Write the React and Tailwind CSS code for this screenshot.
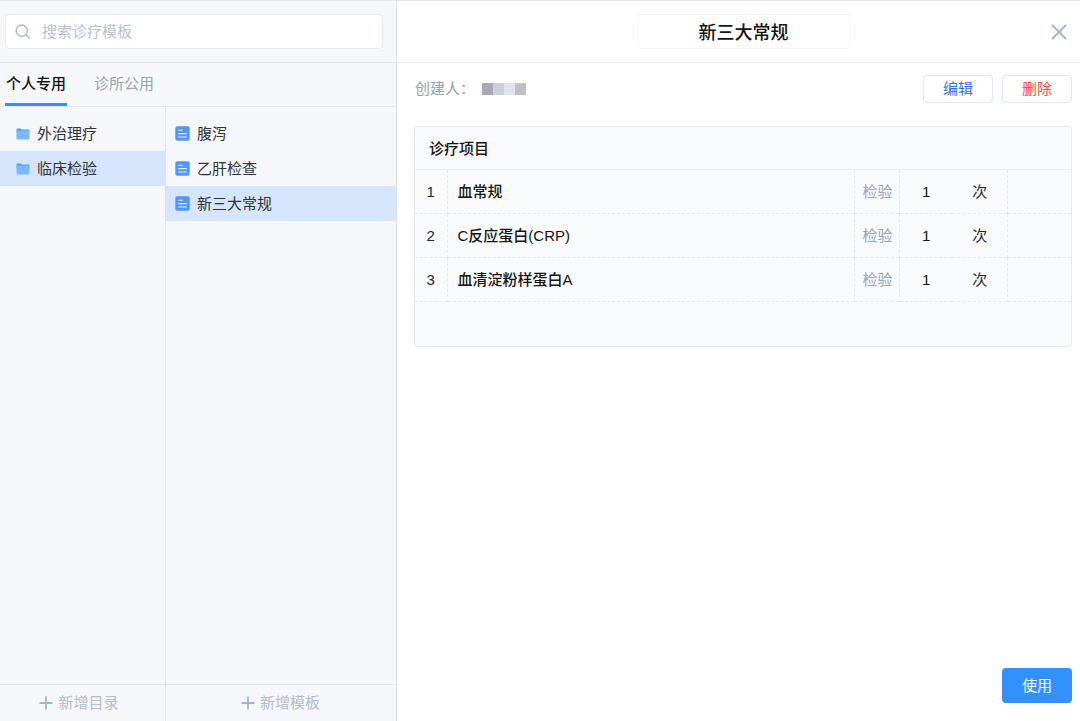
import React, { useState } from 'react';
import { Search, X, Plus } from 'lucide-react';

const TABS = ['个人专用', '诊所公用'];

const FOLDERS = ['外治理疗', '临床检验'];

const TEMPLATES = ['腹泻', '乙肝检查', '新三大常规'];

const ITEMS = [
  { name: '血常规',          type: '检验', count: 1, unit: '次' },
  { name: 'C反应蛋白(CRP)',  type: '检验', count: 1, unit: '次' },
  { name: '血清淀粉样蛋白A', type: '检验', count: 1, unit: '次' },
];

function FolderIcon() {
  return (
    <svg width="14" height="12" viewBox="0 0 14 12" className="shrink-0">
      <path d="M0.5 1.5a1 1 0 0 1 1-1h3.2l1 1h6.8a1 1 0 0 1 1 1V5h-13z" fill="#4f9df8" />
      <rect x="0.5" y="2.4" width="13" height="9.1" rx="1" fill="#7db8fb" />
    </svg>
  );
}

function DocIcon() {
  return (
    <svg width="15" height="15" viewBox="0 0 15 15" className="shrink-0">
      <rect x="0.3" y="0.3" width="14.4" height="14.4" rx="2" fill="#4f97fa" />
      <path d="M3.2 4.2h4.8M3.2 7.6h8.6M3.2 11h8.6" stroke="#e3effe" strokeWidth="1.1" />
    </svg>
  );
}

function ListRow({ icon, label, active, onClick, className }) {
  return (
    <li>
      <button
        onClick={onClick}
        className={`w-full h-[35px] flex items-center gap-[7px] text-left text-[#2f3237] cursor-pointer ${className}
          ${active ? 'bg-[#d5e6fc]' : ''}`}
      >
        {icon}
        {label}
      </button>
    </li>
  );
}

function AddButton({ label, className = '' }) {
  return (
    <button
      className={`h-[37px] shrink-0 flex items-center justify-center gap-0.5 border-t border-[#e0e2e8] text-[#b3bcc8]
        cursor-pointer ${className}`}
    >
      <Plus size={20} strokeWidth={2.2} className="text-[#a9b4c1]" />
      {label}
    </button>
  );
}

export default function App() {
  const [tab, setTab] = useState(0);
  const [folder, setFolder] = useState(1);
  const [template, setTemplate] = useState(2);

  return (
    <div className="min-h-screen flex border-t border-[#e4e5e7] bg-white text-[15px] leading-5 font-['Liberation_Sans','Noto_Sans_CJK_SC',sans-serif]">
      <aside className="w-[397px] shrink-0 flex flex-col bg-[#f5f7fb] border-r border-[#dfe2e8]">
        <div className="pt-[13px] pb-[13px] pl-[5px] pr-[13px] border-b border-[#e0e3e9]">
          <label className="h-[35px] flex items-center gap-[11px] px-2 bg-white border border-[#e6eaf1] rounded">
            <Search size={17} strokeWidth={2.2} className="shrink-0 text-[#b4bdc9]" />
            <input
              type="text"
              aria-label="搜索诊疗模板"
              placeholder="搜索诊疗模板"
              className="flex-1 min-w-0 outline-none placeholder:text-[#b9c1cc]"
            />
          </label>
        </div>

        <div className="h-11 flex gap-[26px] px-[5px] border-b border-[#e4e7ed]">
          {TABS.map((name, i) => (
            <button
              key={name}
              onClick={() => setTab(i)}
              className={`px-px pt-0.5 border-b-3 cursor-pointer
                ${tab === i ? 'border-[#3391ff] font-medium text-[#141414]' : 'border-transparent text-[#98a3b1]'}`}
            >
              {name}
            </button>
          ))}
        </div>

        <div className="flex-1 flex">
          <div className="w-[166px] shrink-0 flex flex-col border-r border-[#dfe2e8]">
            <ul className="flex-1 pt-[9px]">
              {FOLDERS.map((name, i) => (
                <ListRow key={name} label={name} icon={<FolderIcon />} className="pl-4"
                  active={folder === i} onClick={() => setFolder(i)} />
              ))}
            </ul>
            <AddButton label="新增目录" className="pr-2.5" />
          </div>
          <div className="flex-1 flex flex-col">
            <ul className="flex-1 pt-[9px]">
              {TEMPLATES.map((name, i) => (
                <ListRow key={name} label={name} icon={<DocIcon />} className="pl-[9px]"
                  active={template === i} onClick={() => setTemplate(i)} />
              ))}
            </ul>
            <AddButton label="新增模板" className="pr-1" />
          </div>
        </div>
      </aside>

      <main className="flex-1 min-w-0 flex flex-col">
        <header className="grid grid-cols-[1fr_214px_1fr] items-center py-[13px] pl-[18px] pr-2 border-b border-[#eceef2]">
          <input
            type="text"
            readOnly
            aria-label="模板名称"
            value={TEMPLATES[template]}
            className="col-start-2 h-[35px] w-full pb-0.5 text-center text-lg font-medium text-[#141414] border border-[#f4f5f7] rounded outline-none"
          />
          <button aria-label="关闭" className="justify-self-end text-[#a9b2be] cursor-pointer">
            <X size={26} strokeWidth={1.7} />
          </button>
        </header>

        <div className="flex items-center gap-[9px] pt-3 pl-[18px] pr-2">
          <div className="flex-1 flex items-center gap-[7px] text-[#98a0ad]">
            创建人：
            {/* 姓名已打码 */}
            <span className="flex h-3">
              <span className="w-[11px] bg-[#a9a9b6]" />
              <span className="w-[11px] bg-[#ccceda]" />
              <span className="w-[11px] bg-[#dfe3ef]" />
              <span className="w-[11px] bg-[#bcc2c4]" />
            </span>
          </div>
          <button className="w-[70px] h-7 border border-[#e1e6ef] rounded text-[#2f6fe0] cursor-pointer">编辑</button>
          <button className="w-[70px] h-7 border border-[#e1e6ef] rounded text-[#ff4a4a] cursor-pointer">删除</button>
        </div>

        <div className="mt-[23px] ml-[17px] mr-2 pb-11 bg-[#f9fafc] border border-[#e6e9f0] rounded">
          <table className="w-full table-fixed text-[#26282c]">
            <colgroup>
              <col className="w-8" />
              <col />
              <col className="w-[45px]" />
              <col className="w-[52px]" />
              <col className="w-14" />
              <col className="w-[63px]" />
            </colgroup>
            <thead>
              <tr className="h-[42px] border-b border-[#ebedf2]">
                <th colSpan={6} className="pt-0.5 pl-3.5 text-left font-medium text-[#141414]">诊疗项目</th>
              </tr>
            </thead>
            <tbody>
              {ITEMS.map((item, i) => (
                <tr key={item.name} className="h-11 border-b border-dashed border-[#e6e8ee]">
                  <td className="pt-0.5 text-center border-r border-dashed border-[#e6e8ee]">{i + 1}</td>
                  <td className="pt-0.5 pl-2.5 font-medium text-[#141414]">{item.name}</td>
                  <td className="pt-0.5 text-center text-[#98a3b1] border-x border-dashed border-[#e6e8ee]">{item.type}</td>
                  <td className="pt-0.5 text-center text-[#141414]">{item.count}</td>
                  <td className="pt-0.5 text-center">{item.unit}</td>
                  <td className="border-l border-dashed border-[#e6e8ee]" />
                </tr>
              ))}
            </tbody>
          </table>
        </div>

        <footer className="mt-auto flex justify-end pb-[18px] pr-2">
          <button className="w-[70px] h-[35px] rounded bg-[#3391ff] text-white cursor-pointer">使用</button>
        </footer>
      </main>
    </div>
  );
}
